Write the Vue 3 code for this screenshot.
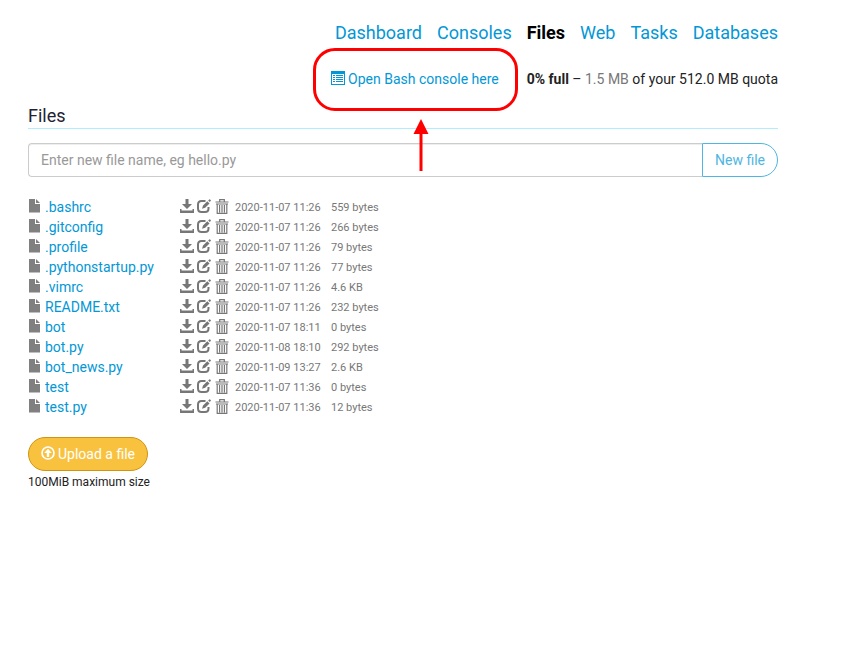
<script setup>
import { ref } from 'vue'

const navItems = ['Dashboard', 'Consoles', 'Files', 'Web', 'Tasks', 'Databases']
const activeItem = 'Files'
const newFileName = ref('')

const files = [
  { name: '.bashrc', modified: '2020-11-07 11:26', size: '559 bytes' },
  { name: '.gitconfig', modified: '2020-11-07 11:26', size: '266 bytes' },
  { name: '.profile', modified: '2020-11-07 11:26', size: '79 bytes' },
  { name: '.pythonstartup.py', modified: '2020-11-07 11:26', size: '77 bytes' },
  { name: '.vimrc', modified: '2020-11-07 11:26', size: '4.6 KB' },
  { name: 'README.txt', modified: '2020-11-07 11:26', size: '232 bytes' },
  { name: 'bot', modified: '2020-11-07 18:11', size: '0 bytes' },
  { name: 'bot.py', modified: '2020-11-08 18:10', size: '292 bytes' },
  { name: 'bot_news.py', modified: '2020-11-09 13:27', size: '2.6 KB' },
  { name: 'test', modified: '2020-11-07 11:36', size: '0 bytes' },
  { name: 'test.py', modified: '2020-11-07 11:36', size: '12 bytes' },
]
</script>

<template>
  <div class="page">
    <nav class="nav">
      <a
        v-for="item in navItems"
        :key="item"
        href="#"
        :class="{ active: item === activeItem }"
      >{{ item }}</a>
    </nav>

    <div class="status">
      <div class="callout">
        <a href="#" class="console-link">
          <svg class="icon" viewBox="0 0 14 14" aria-hidden="true">
            <path fill-rule="evenodd" d="M0 0h14v14H0zM1 3v10h12V3z" />
            <path d="M2 4h2v1H2zM5 4h7v1H5zM2 6h2v1H2zM5 6h7v1H5zM2 8h2v1H2zM5 8h7v1H5zM2 10h2v1H2zM5 10h7v1H5z" />
          </svg>
          <span>Open Bash console here</span>
        </a>
        <svg class="arrow" viewBox="0 0 16 52" aria-hidden="true">
          <path d="M8 0l7.500 15H9.500v37h-3V15H.5z" />
        </svg>
      </div>
      <div class="quota"><strong>0% full</strong> – <span class="used">1.5 MB</span> of your 512.0 MB quota</div>
    </div>

    <main>
      <h1>Files</h1>

      <form class="new-file" @submit.prevent>
        <input
          v-model="newFileName"
          type="text"
          aria-label="New file name"
          placeholder="Enter new file name, eg hello.py"
        >
        <button type="submit">New file</button>
      </form>

      <table class="files">
        <tbody>
          <tr v-for="file in files" :key="file.name">
            <td class="name">
              <div class="cell">
                <svg class="icon file" viewBox="0 0 12 14" aria-hidden="true">
                  <path d="M1 0h6v5h5v8.500H1zM8 0l4 4H8z" />
                </svg>
                <a href="#">{{ file.name }}</a>
              </div>
            </td>
            <td class="actions">
              <div class="cell">
                <a href="#" aria-label="Download">
                  <svg class="icon" viewBox="0 0 14 14" aria-hidden="true">
                    <path d="M5.500 0h3v5H12l-5 5-5-5h3.500zM0 10h1.500v1.500h11V10H14v4H0z" />
                  </svg>
                </a>
                <a href="#" aria-label="Edit">
                  <svg class="icon" viewBox="0 0 14 14" aria-hidden="true">
                    <path d="M8.500 2H4.500Q1 2 1 5.500v4Q1 13 4.500 13h3.500Q11.500 13 11.500 9.500V8" fill="none" stroke="currentColor" stroke-width="2" />
                    <path d="M5 9.800l1-3.300L10.300 2.200l2.200 2.200L8.200 8.800zM11.200 1.400l1-1q.4-.4.8 0l.7.700q.4.400 0 .8l-1 1z" />
                  </svg>
                </a>
                <a href="#" class="delete" aria-label="Delete">
                  <svg class="icon trash" viewBox="0 0 14 15" aria-hidden="true">
                    <path d="M4.700 2.500V.6h4.600v1.900M.5 3h13M1 5h12M2.200 5v9.300h9.600V5M4.600 6v7.500M7 6v7.500M9.400 6v7.500" fill="none" stroke="currentColor" stroke-width="1.200" />
                  </svg>
                </a>
              </div>
            </td>
            <td class="modified">{{ file.modified }}</td>
            <td class="size">{{ file.size }}</td>
          </tr>
        </tbody>
      </table>

      <button type="button" class="upload">
        <svg class="icon" viewBox="0 0 14 14" aria-hidden="true">
          <circle cx="7" cy="7" r="6" fill="none" stroke="currentColor" stroke-width="1.700" />
          <path d="M7 2.800L10.800 7H8.200v4H5.800V7H3.200z" />
        </svg>
        <span>Upload a file</span>
      </button>
      <p class="limit">100MiB maximum size</p>
    </main>
  </div>
</template>

<style>
body {
  margin: 0;
  background: #fff;
}
</style>

<style scoped>
.page {
  box-sizing: border-box;
  padding: 20px 68px 20px 28px;
  color: #222;
  font: 14px/20px Roboto, "Liberation Sans", sans-serif;
}

a {
  color: #0397d6;
  text-decoration: none;
}

.icon {
  display: block;
  flex: none;
  width: 14px;
  height: 14px;
  margin-bottom: 2px;
  fill: currentColor;
}

.nav {
  display: flex;
  justify-content: flex-end;
  gap: 15px;
  font-size: 18px;
  line-height: 26px;
}

.nav .active {
  color: #000;
  font-weight: 700;
}

.status {
  display: flex;
  align-items: center;
  justify-content: flex-end;
  gap: 9px;
  margin-top: 2px;
}

.callout {
  position: relative;
  box-sizing: border-box;
  padding: 18px 16px 19px 15px;
  border: 3px solid #f00;
  border-radius: 22px;
}

.console-link {
  display: flex;
  align-items: center;
  gap: 3px;
  line-height: 20px;
}

.arrow {
  position: absolute;
  top: 68px;
  left: 97px;
  width: 16px;
  height: 52px;
  fill: #f00;
}

.quota {
  padding-bottom: 2px;
}

.used {
  color: #777;
}

/* The heading tucks up under the highlighted link. */
main {
  margin-top: -5px;
}

h1 {
  margin: 0;
  padding-bottom: 2px;
  border-bottom: 1px solid #b3ebff;
  color: #223;
  font-size: 18px;
  font-weight: 400;
  line-height: 20px;
}

.new-file {
  display: flex;
  margin-top: 14px;
}

.new-file input {
  box-sizing: border-box;
  flex: 1;
  min-width: 0;
  height: 34px;
  padding: 6px 12px;
  border: 1px solid #ccc;
  border-right: 0;
  border-radius: 4px 0 0 4px;
  box-shadow: inset 0 1px 1px rgba(0, 0, 0, 0.075);
  color: #555;
  font: inherit;
}

.new-file input::placeholder {
  color: #999;
  opacity: 1;
}

.new-file button {
  height: 34px;
  padding: 0 12px;
  border: 1px solid #4eb6e1;
  border-radius: 0 17px 17px 0;
  background: #fff;
  color: #4eb6e1;
  font: inherit;
}

.files {
  margin-top: 20px;
  border-collapse: collapse;
}

.files td {
  box-sizing: border-box;
  height: 20px;
  padding: 0;
}

.files .name {
  width: 152px;
}

.cell {
  display: flex;
  align-items: center;
}

.name .cell {
  gap: 5px;
}

.icon.file {
  width: 12px;
  color: #808080;
}

.actions a {
  color: #777;
}

.actions .cell {
  gap: 3px;
  width: 55px;
}

.icon.trash {
  height: 15px;
}

.actions .delete {
  padding-left: 1px;
}

.files .modified,
.files .size {
  padding-top: 2px;
  color: #777;
  font-size: 11px;
  line-height: 18px;
  white-space: nowrap;
}

.files .modified {
  width: 96px;
}

.upload {
  display: flex;
  align-items: center;
  gap: 3px;
  height: 34px;
  margin-top: 20px;
  padding: 0 12px;
  border: 1px solid #cf9512;
  border-radius: 17px;
  background: #f8c23f;
  color: #fff;
  font: inherit;
}

.limit {
  margin: 1px 0 0;
  font-size: 12px;
}
</style>
